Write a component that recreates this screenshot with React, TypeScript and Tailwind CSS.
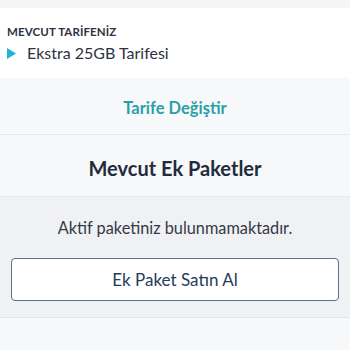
export default function App() {
  return (
    <div className="w-[350px] h-[350px] overflow-hidden bg-[#f7f8fa] font-['Lato',sans-serif]">
      <div className="h-[8px] bg-[#f4f5f7]" />

      {/* current tariff */}
      <div className="h-[70px] bg-white px-[7px] pt-[17px]">
        <div className="text-[11.5px] font-bold leading-[14px] text-[#2d3340] tracking-[0.01em]">
          MEVCUT TARİFENİZ
        </div>
        <div className="mt-[4px] flex items-center">
          <svg width="9" height="11" viewBox="0 0 9 11" className="shrink-0">
            <path d="M0 0 L9 5.5 L0 11 Z" fill="#1fb3d6" />
          </svg>
          <span className="ml-[11px] text-[16px] leading-[20px] text-[#2d3340]">
            Ekstra 25GB Tarifesi
          </span>
        </div>
      </div>

      <div className="h-[57px] flex items-center justify-center pt-[5px] border-b border-[#e6e8ec]">
        <span className="text-[16.5px] font-bold text-[#2aa0a8]">Tarife Değiştir</span>
      </div>

      <div className="h-[62px] flex items-center justify-center pt-[5px] border-b border-[#e6e8ec]">
        <span className="text-[20px] font-bold text-[#232b3a]">Mevcut Ek Paketler</span>
      </div>

      <div className="h-[121px] bg-[#eff1f4] border-b border-[#e3e5e9] px-[11px] pt-[21px]">
        <div className="text-center text-[16.3px] leading-[20px] text-[#343a47]">
          Aktif paketiniz bulunmamaktadır.
        </div>
        <button className="mt-[20px] w-full h-[43px] rounded-[4px] border-[1.5px] border-[#5d7088] bg-white text-[17px] text-[#263b5a]">
          Ek Paket Satın Al
        </button>
      </div>
    </div>
  );
}
